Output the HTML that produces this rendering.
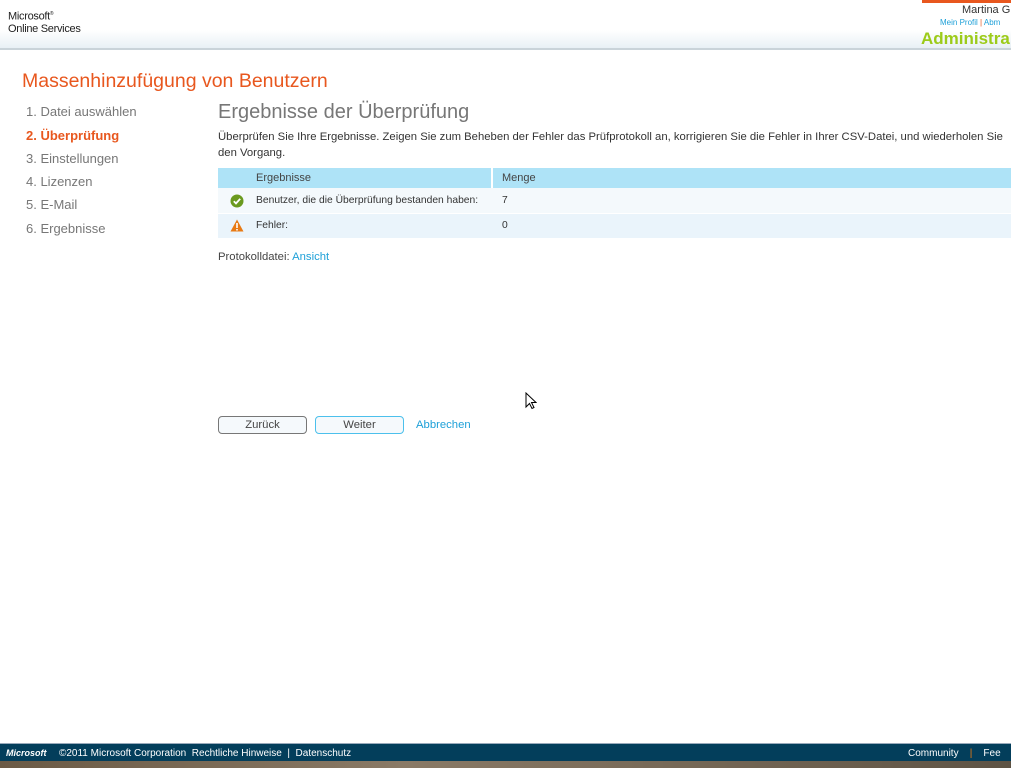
<!DOCTYPE html>
<html><head><meta charset="utf-8"><style>
*{margin:0;padding:0;box-sizing:border-box}
body{width:1011px;height:768px;overflow:hidden;background:#fff;font-family:"Liberation Sans","DejaVu Sans",sans-serif;position:relative;color:#333}
.hdr{position:absolute;left:0;top:0;width:1011px;height:50px;background:linear-gradient(#fff 0,#fff 30px,#e8f0f5 48px);border-bottom:2px solid #c9d3d9}
.abs{position:absolute;white-space:nowrap}
.step{position:absolute;left:26px;font-size:13px;color:#777}
</style></head><body>
<div class="hdr"></div>
<div class="abs" style="left:8px;top:8px;font-size:11px;color:#222;line-height:12px;letter-spacing:-0.3px">Microsoft<sup style="font-size:5px">®</sup><br>Online Services</div>
<div class="abs" style="left:922px;top:0;width:89px;height:3px;background:#e8571e"></div>
<div class="abs" style="left:962px;top:4px;font-size:11px;color:#333">Martina G</div>
<div class="abs" style="left:940px;top:18px;font-size:8px;color:#1ea0d8">Mein Profil <span style="color:#e8571e">|</span> Abm</div>
<div class="abs" style="left:921px;top:29px;font-size:17px;font-weight:bold;color:#9ccb19">Administra</div>
<div class="abs" style="left:22px;top:70px;font-size:19.5px;color:#e8571e">Massenhinzufügung von Benutzern</div>
<div class="step" style="top:104px">1. Datei auswählen</div>
<div class="step" style="top:128px;color:#e8571e;font-weight:bold">2. Überprüfung</div>
<div class="step" style="top:151px">3. Einstellungen</div>
<div class="step" style="top:174px">4. Lizenzen</div>
<div class="step" style="top:197px">5. E-Mail</div>
<div class="step" style="top:221px">6. Ergebnisse</div>
<div class="abs" style="left:218px;top:101px;font-size:20px;color:#777">Ergebnisse der Überprüfung</div>
<div class="abs" style="left:218px;top:129px;font-size:11.3px;color:#333;line-height:16px">Überprüfen Sie Ihre Ergebnisse. Zeigen Sie zum Beheben der Fehler das Prüfprotokoll an, korrigieren Sie die Fehler in Ihrer CSV-Datei, und wiederholen Sie<br>den Vorgang.</div>
<div class="abs" style="left:218px;top:168px;width:793px;height:20px;background:#aee3f7"></div>
<div class="abs" style="left:491px;top:168px;width:2px;height:70px;background:#fff"></div>
<div class="abs" style="left:218px;top:188px;width:793px;height:25px;background:#f4f9fc"></div>
<div class="abs" style="left:218px;top:214px;width:793px;height:24px;background:#eaf4fb"></div>
<div class="abs" style="left:256px;top:172px;font-size:11px;color:#444">Ergebnisse</div>
<div class="abs" style="left:502px;top:172px;font-size:11px;color:#444">Menge</div>
<svg class="abs" style="left:230px;top:194px" width="14" height="14"><circle cx="7" cy="7" r="6.5" fill="#6a9a1f"/><path d="M3.8 7.2l2.2 2.2 4.2-4.6" stroke="#fff" stroke-width="1.8" fill="none"/></svg>
<svg class="abs" style="left:230px;top:219px" width="14" height="13"><path d="M7 0.5L13.5 12.5H0.5Z" fill="#e87a14"/><rect x="6.2" y="4" width="1.6" height="5" fill="#fff"/><rect x="6.2" y="10" width="1.6" height="1.5" fill="#fff"/></svg>
<div class="abs" style="left:256px;top:195px;font-size:10.3px;color:#333">Benutzer, die die Überprüfung bestanden haben:</div>
<div class="abs" style="left:502px;top:195px;font-size:10.3px;color:#333">7</div>
<div class="abs" style="left:256px;top:220px;font-size:10.3px;color:#333">Fehler:</div>
<div class="abs" style="left:502px;top:220px;font-size:10.3px;color:#333">0</div>
<div class="abs" style="left:218px;top:251px;font-size:11.3px;color:#444">Protokolldatei: <span style="color:#1ea0d8">Ansicht</span></div>
<div class="abs" style="left:218px;top:416px;width:89px;height:18px;border:1px solid #777;border-radius:4px;background:#f5f9fc;font-size:11.3px;text-align:center;line-height:16px;color:#444">Zurück</div>
<div class="abs" style="left:315px;top:416px;width:89px;height:18px;border:1px solid #4cc0ec;border-radius:4px;background:#f5f9fc;font-size:11.3px;text-align:center;line-height:16px;color:#444">Weiter</div>
<div class="abs" style="left:416px;top:419px;font-size:11.3px;color:#1ea0d8">Abbrechen</div>
<svg class="abs" style="left:525px;top:392px" width="12" height="18"><path d="M1 1v14l3.5-3.5 2.5 5 2-1-2.5-5H11Z" fill="#fff" stroke="#000"/></svg>
<div class="abs" style="left:0;top:743px;width:1011px;height:18px;background:#033e5b;border-top:1px solid #9ab"></div>
<div class="abs" style="left:6px;top:748px;font-size:9px;color:#fff;font-style:italic;font-weight:bold">Microsoft</div>
<div class="abs" style="left:59px;top:748px;font-size:10px;color:#fff">©2011 Microsoft Corporation&nbsp; Rechtliche Hinweise &nbsp;|&nbsp; Datenschutz</div>
<div class="abs" style="left:908px;top:748px;font-size:10px;color:#fff">Community &nbsp;&nbsp;&nbsp;<span style="color:#e87a14">|</span>&nbsp;&nbsp;&nbsp; Fee</div>
<div class="abs" style="left:0;top:761px;width:1011px;height:7px;background:linear-gradient(90deg,#6b5a45,#8a7a66 40%,#5e5344)"></div>
</body></html>
